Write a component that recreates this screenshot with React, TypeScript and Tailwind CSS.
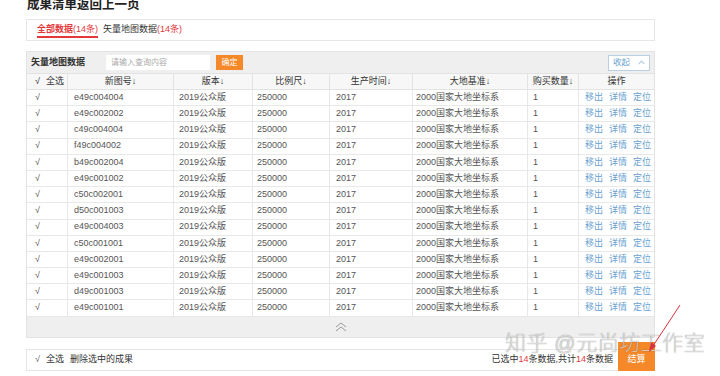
const rows = [
  'e49c004004',
  'e49c002002',
  'c49c004004',
  'f49c004002',
  'b49c002004',
  'e49c001002',
  'c50c002001',
  'd50c001003',
  'e49c004003',
  'c50c001001',
  'e49c002001',
  'e49c001003',
  'd49c001003',
  'e49c001001',
];

const cols = 'grid grid-cols-[41px_106px_79px_77px_83px_115px_51px_75px]';

function ChevronUp({ className }: { className?: string }) {
  return (
    <svg viewBox="0 0 10 6" className={className} fill="none" stroke="currentColor" strokeWidth="1.2">
      <polyline points="1,5 5,1 9,5" />
    </svg>
  );
}

export default function App() {
  return (
    <div
      className="relative w-[720px] h-[376px] overflow-hidden bg-white text-[#555] text-[9px]"
      style={{ fontFamily: '"Liberation Sans", "Noto Sans CJK SC", sans-serif' }}
    >
      <div className="ml-[26px] w-[629px]">
        {/* title */}
        <div className="h-[20px]">
          <h1 className="-mt-[1px] ml-[1px] text-[12.5px] leading-[12px] font-bold text-[#222]">
            成果清单返回上一页
          </h1>
        </div>

        {/* tabs */}
        <div className="h-[22px] border border-[#e6e6e6] flex items-end gap-[5px] px-[10px]">
          <span className="mb-[2px] pb-[1px] leading-[12px] border-b-2 border-[#e4393c] text-[#e4393c] font-bold">
            全部数据<span className="font-normal">(14条)</span>
          </span>
          <span className="mb-[5px] leading-[12px] text-[#333]">
            矢量地图数据<span className="text-[#e4393c]">(14条)</span>
          </span>
        </div>

        {/* data panel */}
        <div className="mt-[10px] border border-[#e3e3e3]">
          <div className="h-[21px] bg-[#efefef] flex items-center">
            <span className="w-[79px] pl-[4px] font-bold text-[#333]">矢量地图数据</span>
            <div className="w-[104px] h-[15px] bg-white pl-[5px] flex items-center text-[8px] text-[#aaa]">
              请输入查询内容
            </div>
            <button className="ml-[6px] w-[27px] h-[15px] bg-[#f5892a] text-white text-[8px]">确定</button>
            <button className="ml-auto mr-[4px] w-[42px] h-[16px] bg-white border border-[#b9cfe3] text-[#6a9fd0] flex items-center justify-center gap-[8px] text-[8.5px]">
              收起
              <ChevronUp className="w-[7px] h-[5px]" />
            </button>
          </div>

          {/* header row */}
          <div className={`${cols} h-[17px] bg-[#f7f7f7] border-t border-b border-[#e3e3e3] text-[#333]`}>
            <div className="flex items-center pl-[8px] gap-[6px] border-r border-[#e3e3e3]">
              <span>√</span>
              <span>全选</span>
            </div>
            <div className="flex items-center justify-center border-r border-[#e3e3e3]">新图号↓</div>
            <div className="flex items-center justify-center border-r border-[#e3e3e3]">版本↓</div>
            <div className="flex items-center justify-center border-r border-[#e3e3e3]">比例尺↓</div>
            <div className="flex items-center justify-center border-r border-[#e3e3e3]">生产时间↓</div>
            <div className="flex items-center justify-center border-r border-[#e3e3e3]">大地基准↓</div>
            <div className="flex items-center justify-center border-r border-[#e3e3e3]">购买数量↓</div>
            <div className="flex items-center justify-center">操作</div>
          </div>

          {rows.map((id) => (
            <div key={id} className={`${cols} h-[16.2px] border-b border-[#e8e8e8]`}>
              <div className="flex items-center pl-[8px] border-r border-[#e8e8e8]">√</div>
              <div className="flex items-center pl-[6px] border-r border-[#e8e8e8]">{id}</div>
              <div className="flex items-center pl-[5px] border-r border-[#e8e8e8]">2019公众版</div>
              <div className="flex items-center pl-[4px] border-r border-[#e8e8e8]">250000</div>
              <div className="flex items-center pl-[6px] border-r border-[#e8e8e8]">2017</div>
              <div className="flex items-center pl-[3px] border-r border-[#e8e8e8]">2000国家大地坐标系</div>
              <div className="flex items-center pl-[5px] border-r border-[#e8e8e8]">1</div>
              <div className="flex items-center pl-[6px] gap-[6px] text-[#6a9fd0]">
                <span>移出</span>
                <span>详情</span>
                <span>定位</span>
              </div>
            </div>
          ))}

          <div className="h-[20px] bg-[#efefef] flex items-center justify-center text-[#999]">
            <svg viewBox="0 0 12 10" className="w-[12px] h-[10px]" fill="none" stroke="currentColor" strokeWidth="1">
              <polyline points="1,5 6,1 11,5" />
              <polyline points="1,9 6,5 11,9" />
            </svg>
          </div>
        </div>

        {/* bottom bar */}
        <div className="mt-[11px] h-[22px] border-t border-b border-l border-[#e6e6e6] flex">
          <div className="flex items-center pl-[8px] gap-[6px] text-[#333]">
            <span className="text-[#666]">√</span>
            <span>全选</span>
            <span>删除选中的成果</span>
          </div>
          <div className="ml-auto flex items-center text-[#333]">
            已选中<span className="text-[#e4393c]">14</span>条数据,共计<span className="text-[#e4393c]">14</span>条数据
          </div>
          <button className="ml-[5px] w-[37px] h-[29px] self-end -mb-[1px] bg-[#f5892a] text-white text-[9px] pt-[8px]">
            结算
          </button>
        </div>
      </div>

      {/* watermark */}
      <div className="absolute left-[505px] top-[331px] text-[21px] leading-[24px] font-light text-white/70 [text-shadow:0_0_1px_rgba(0,0,0,0.55)] tracking-[0.5px]">
        知乎 @元尚坊工作室
      </div>
      <svg className="absolute left-[640px] top-[300px] w-[50px] h-[60px]" viewBox="0 0 50 60" fill="none">
        <line x1="40" y1="5" x2="11" y2="49" stroke="#d8343c" strokeWidth="1" />
        <polygon points="9,52 11,42 16,46" fill="#d8343c" />
      </svg>
    </div>
  );
}
